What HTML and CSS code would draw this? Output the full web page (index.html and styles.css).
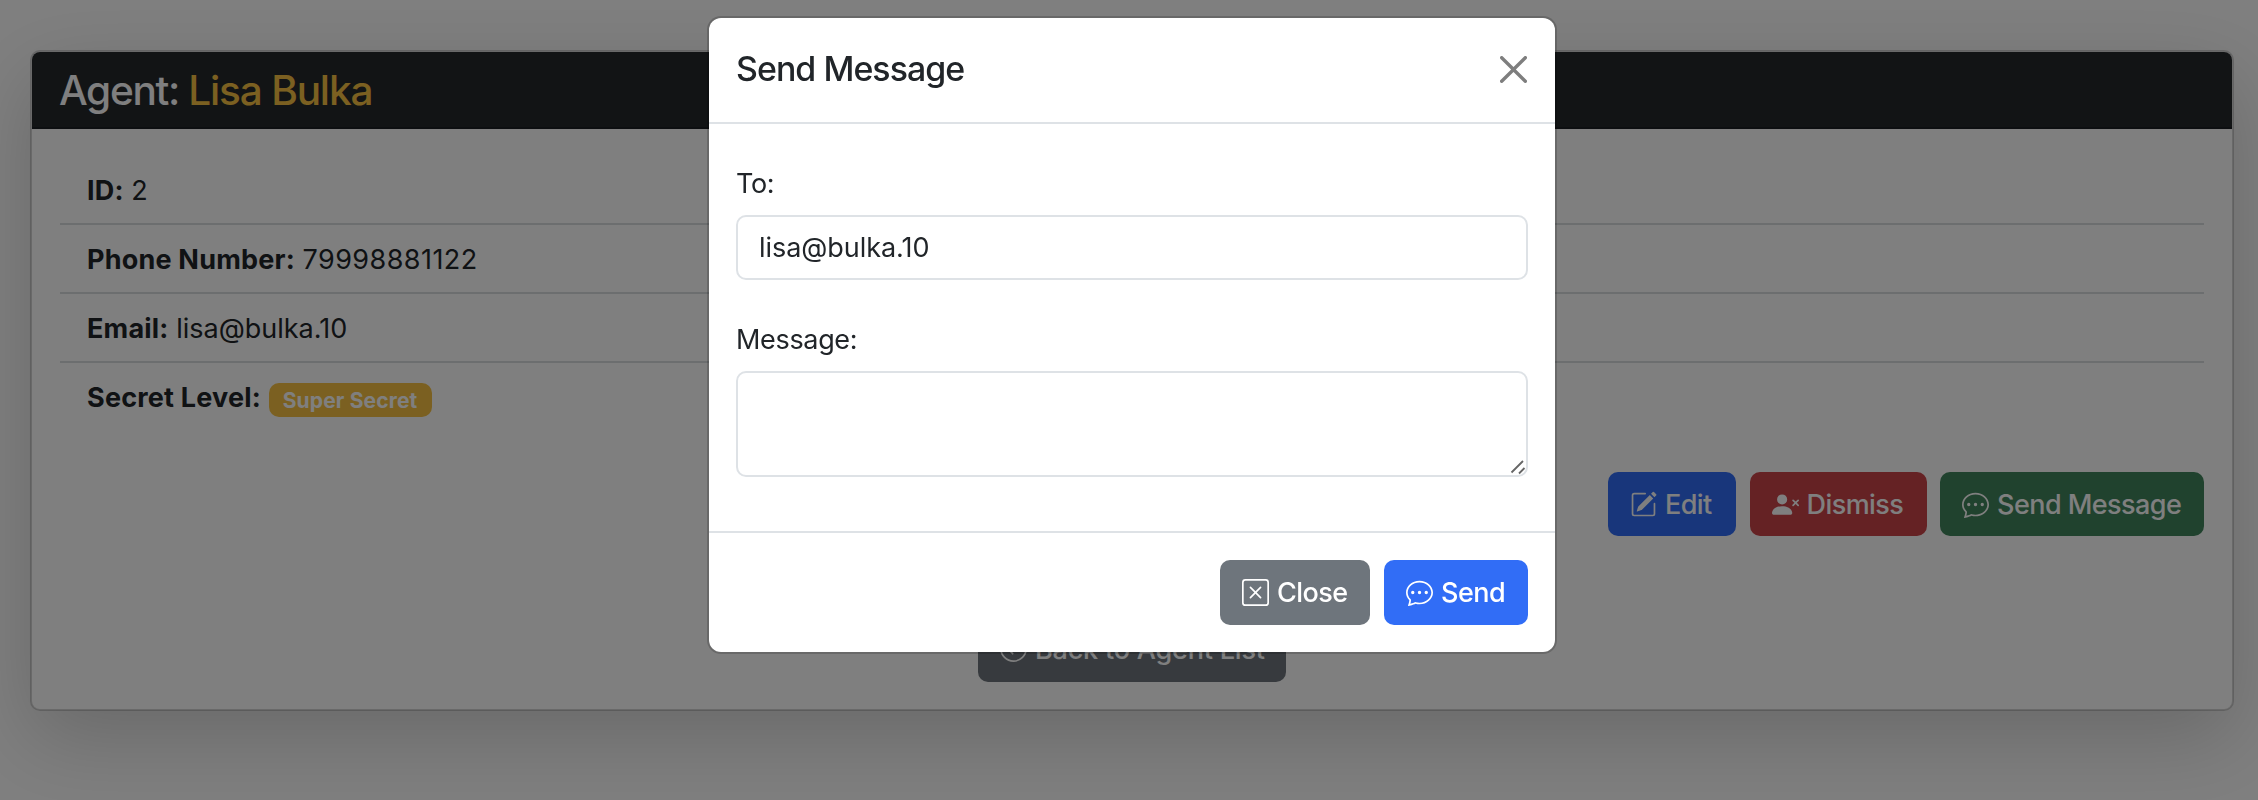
FILE: index.html
```html
<!DOCTYPE html>
<html lang="en">
<head>
<meta charset="utf-8">
<title>Agent</title>
<link rel="stylesheet" href="styles.css">
</head>
<body>
<svg class="sprite" width="0" height="0" aria-hidden="true">
  <symbol id="chat-dots" viewBox="0 0 16 16"><path d="M5 8a1 1 0 1 1-2 0 1 1 0 0 1 2 0m4 0a1 1 0 1 1-2 0 1 1 0 0 1 2 0m3 1a1 1 0 1 0 0-2 1 1 0 0 0 0 2"/><path d="m2.165 15.803.02-.004c1.83-.363 2.948-.842 3.468-1.105A9 9 0 0 0 8 15c4.418 0 8-3.134 8-7s-3.582-7-8-7-8 3.134-8 7c0 1.76.743 3.37 1.97 4.6a10.4 10.4 0 0 1-.524 2.318l-.003.011a11 11 0 0 1-.244.637c-.079.186.074.394.273.362a22 22 0 0 0 .693-.125m.8-3.108a1 1 0 0 0-.287-.801C1.618 10.83 1 9.468 1 8c0-3.192 3.004-6 7-6s7 2.808 7 6-3.004 6-7 6a8 8 0 0 1-2.088-.272 1 1 0 0 0-.711.074c-.387.196-1.24.57-2.634.893a11 11 0 0 0 .398-2"/></symbol>
  <symbol id="pencil-square" viewBox="0 0 16 16"><path d="M15.502 1.94a.5.5 0 0 1 0 .706L14.459 3.69l-2-2L13.502.646a.5.5 0 0 1 .707 0l1.293 1.293zm-1.75 2.456-2-2L4.939 9.21a.5.5 0 0 0-.121.196l-.805 2.414a.25.25 0 0 0 .316.316l2.414-.805a.5.5 0 0 0 .196-.12l6.813-6.814z"/><path fill-rule="evenodd" d="M1 13.5A1.5 1.5 0 0 0 2.5 15h11a1.5 1.5 0 0 0 1.5-1.5v-6a.5.5 0 0 0-1 0v6a.5.5 0 0 1-.5.5h-11a.5.5 0 0 1-.5-.5v-11a.5.5 0 0 1 .5-.5H9a.5.5 0 0 0 0-1H2.5A1.5 1.5 0 0 0 1 2.5z"/></symbol>
  <symbol id="person-x-fill" viewBox="0 0 16 16"><path fill-rule="evenodd" d="M1 14s-1 0-1-1 1-4 6-4 6 3 6 4-1 1-1 1zm5-6a3 3 0 1 0 0-6 3 3 0 0 0 0 6m6.146-2.854a.5.5 0 0 1 .708 0L14 6.293l1.146-1.147a.5.5 0 0 1 .708.708L14.707 7l1.147 1.146a.5.5 0 0 1-.708.708L14 7.707l-1.146 1.147a.5.5 0 0 1-.708-.708L13.293 7l-1.147-1.146a.5.5 0 0 1 0-.708"/></symbol>
  <symbol id="x-square" viewBox="0 0 16 16"><path d="M14 1a1 1 0 0 1 1 1v12a1 1 0 0 1-1 1H2a1 1 0 0 1-1-1V2a1 1 0 0 1 1-1zM2 0a2 2 0 0 0-2 2v12a2 2 0 0 0 2 2h12a2 2 0 0 0 2-2V2a2 2 0 0 0-2-2z"/><path d="M4.646 4.646a.5.5 0 0 1 .708 0L8 7.293l2.646-2.647a.5.5 0 0 1 .708.708L8.707 8l2.647 2.646a.5.5 0 0 1-.708.708L8 8.707l-2.646 2.647a.5.5 0 0 1-.708-.708L7.293 8 4.646 5.354a.5.5 0 0 1 0-.708"/></symbol>
  <symbol id="arrow-left-circle" viewBox="0 0 16 16"><path fill-rule="evenodd" d="M1 8a7 7 0 1 0 14 0A7 7 0 0 0 1 8m15 0A8 8 0 1 1 0 8a8 8 0 0 1 16 0m-4.5-.5a.5.5 0 0 1 0 1H5.707l2.147 2.146a.5.5 0 0 1-.708.708l-3-3a.5.5 0 0 1 0-.708l3-3a.5.5 0 1 1 .708.708L5.707 7.5z"/></symbol>
</svg>

<main class="card">
  <h4 class="card-header"><span>Agent:</span> <span class="name">Lisa Bulka</span></h4>
  <div class="card-body">
    <ul class="list">
      <li><b>ID:</b> <span>2</span></li>
      <li><b>Phone Number:</b> <span class="digits">79998881122</span></li>
      <li><b>Email:</b> <span>lisa@bulka.10</span></li>
      <li><b>Secret Level:</b> <span class="badge">Super Secret</span></li>
    </ul>
    <div class="actions">
      <button class="btn primary w-edit"><svg class="icon"><use href="#pencil-square"/></svg><span>Edit</span></button>
      <button class="btn danger w-dismiss"><svg class="icon"><use href="#person-x-fill"/></svg><span>Dismiss</span></button>
      <button class="btn success w-message"><svg class="icon"><use href="#chat-dots"/></svg><span>Send Message</span></button>
    </div>
    <div class="back">
      <button class="btn secondary w-back"><svg class="icon"><use href="#arrow-left-circle"/></svg><span>Back to Agent List</span></button>
    </div>
  </div>
</main>

<div class="backdrop">
  <section class="modal" role="dialog">
    <header class="modal-header">
      <h5 class="modal-title">Send Message</h5>
      <svg class="close" viewBox="0 0 16 16"><path d="M.293.293a1 1 0 0 1 1.414 0L8 6.586 14.293.293a1 1 0 1 1 1.414 1.414L9.414 8l6.293 6.293a1 1 0 0 1-1.414 1.414L8 9.414l-6.293 6.293a1 1 0 0 1-1.414-1.414L6.586 8 .293 1.707a1 1 0 0 1 0-1.414z"/></svg>
    </header>
    <div class="modal-body">
      <label class="label" for="to">To:</label>
      <input class="control" id="to" value="lisa@bulka.10">
      <label class="label" for="msg">Message:</label>
      <div class="area">
        <textarea class="control" id="msg"></textarea>
        <svg class="grip" viewBox="0 0 16 16"><path d="M1.5 13.5 13 2M9 14.500 14.500 9"/></svg>
      </div>
    </div>
    <footer class="modal-footer">
      <button class="btn secondary w-close"><svg class="icon"><use href="#x-square"/></svg><span>Close</span></button>
      <button class="btn primary w-send"><svg class="icon"><use href="#chat-dots"/></svg><span>Send</span></button>
    </footer>
  </section>
</div>
</body>
</html>
```
FILE: styles.css
```css
* { box-sizing: border-box; }
body {
  margin: 0;
  padding: 50px 24px 0 30px;
  height: 800px;
  overflow: hidden;
  background: #fff;
  color: #212529;
  font: 400 27px/40.6px Inter, "Liberation Sans", sans-serif;
}
.sprite { position: absolute; }
h4, h5, ul { margin: 0; padding: 0; font-weight: 500; }
.card {
  height: 661px;
  border: 2px solid rgba(0, 0, 0, .175);
  border-radius: 10px;
  background: #fff;
  background-clip: padding-box;
  box-shadow: 0 27px 81px rgba(0, 0, 0, .175);
}
.card-header {
  height: 77px;
  padding: 14px 27px;
  border-bottom: 2px solid #1b1f22;
  border-radius: 8px 8px 0 0;
  background: #24282b;
  color: #fff;
  font-size: 40.6px;
  letter-spacing: -1.35px;
  line-height: 49px;
}
.name { color: #f6c143; letter-spacing: -1.2px; }
.card-body { padding: 27px 28px 0 28px; }
.list { list-style: none; font-weight: 400; }
.list li { height: 69px; padding: 14.500px 27px 0; border-bottom: 2px solid #d9dcdf; }
.list li:last-child { border: 0; }
.list b { letter-spacing: .2px; }
.digits { letter-spacing: .45px; }
.badge {
  display: inline-block;
  width: 163px;
  height: 34px;
  border-radius: 10px;
  background: #f6c143;
  color: #fff;
  font-size: 21px;
  font-weight: 700;
  letter-spacing: .15px;
  line-height: 35px;
  text-align: center;
  vertical-align: -1px;
}
.actions { display: flex; justify-content: flex-end; gap: 13.500px; margin-top: 40px; }
.actions .btn { height: 64px; }
.back { display: flex; justify-content: center; margin-top: 81px; }
.back .icon { margin-bottom: 3px; }
.btn {
  display: flex;
  align-items: center;
  height: 65px;
  padding: 0 0 0 22px;
  border: 0;
  border-radius: 10px;
  color: #fff;
  font: inherit;
  font-weight: 500;
  letter-spacing: -.55px;
  white-space: nowrap;
}
.btn span { padding-top: 2px; }
.icon { width: 27px; height: 27px; margin-right: 8px; fill: currentColor; }
.primary { background: #316df6; }
.secondary { background: #6e757c; }
.danger { background: #ca4449; }
.success { background: #40845c; }
.w-edit { width: 128px; }
.w-dismiss { width: 177px; }
.w-message { width: 264px; }
.w-back { width: 308px; letter-spacing: -.2px; }
.w-close { width: 150px; }
.w-send { width: 144px; }
.backdrop {
  position: fixed;
  inset: 0;
  display: flex;
  justify-content: center;
  align-items: flex-start;
  padding: 16px 0 0 6px;
  background: rgba(0, 0, 0, .5);
}
.modal {
  width: 850px;
  height: 638px;
  border: 2px solid rgba(0, 0, 0, .175);
  border-radius: 14px;
  background: #fff;
  background-clip: padding-box;
}
.modal-header {
  display: flex;
  align-items: center;
  justify-content: space-between;
  height: 106px;
  padding: 0 28px 2px 27px;
  border-bottom: 2px solid #dee2e6;
}
.modal-title { font-size: 33.9px; letter-spacing: -.95px; }
.close { width: 27px; height: 27px; opacity: .5; }
.modal-body { height: 407px; padding: 40px 27px 0; }
.label { display: block; margin-bottom: 10px; letter-spacing: -.33px; }
.control {
  display: block;
  width: 792px;
  height: 65px;
  padding: 0 20px 0 21px;
  border: 2px solid #dee2e6;
  border-radius: 10px;
  background: #fff;
  color: #212529;
  font: inherit;
  letter-spacing: -.05px;
  outline: 0;
  resize: none;
}
.control + .label { margin-top: 40.400px; }
.area { position: relative; }
.area .control { height: 106px; }
.grip {
  position: absolute;
  left: 774px;
  top: 88px;
  width: 16px;
  height: 16px;
  fill: none;
  stroke: #666;
  stroke-width: 1.8;
}
.modal-footer {
  display: flex;
  justify-content: flex-end;
  gap: 14px;
  padding: 27px 27px 0;
  border-top: 2px solid #dee2e6;
}
```
